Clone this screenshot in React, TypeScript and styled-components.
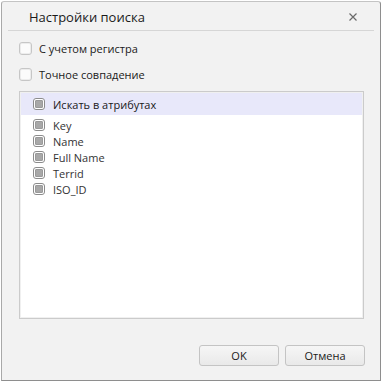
import styled, { createGlobalStyle } from "styled-components";

const GlobalStyle = createGlobalStyle`
  body {
    margin: 0;
    background: #ffffff;
    font-family: "Open Sans", "Liberation Sans", sans-serif;
  }
`;

const Dialog = styled.div`
  box-sizing: border-box;
  width: 380px;
  height: 380px;
  margin: 1px 0 0 1px;
  display: flex;
  flex-direction: column;
  background: #f2f2f2;
  border: 1px solid #c4c4c4;
  border-right-color: #8e8e8e;
  border-bottom-color: #8e8e8e;
  border-left-color: #a9a9a9;
  border-radius: 3px 3px 0 0;
`;

const Header = styled.div`
  height: 28px;
  display: flex;
  align-items: center;
  justify-content: space-between;
  padding: 0 22px 0 27px;
`;

const Title = styled.div`
  font-size: 13px;
  color: #1a1a1a;
  padding-top: 1px;
`;

const Close = styled.div`
  width: 10px;
  height: 10px;
  display: flex;
  align-items: center;
  justify-content: center;
  margin-top: 2px;
`;

const Divider = styled.div`
  height: 1px;
  margin: 0 6px;
  background: #d6d6d6;
`;

const Body = styled.div`
  flex: 1;
  display: flex;
  flex-direction: column;
  padding: 10px 16px 0 17px;
`;

const Options = styled.div`
  display: flex;
  flex-direction: column;
  gap: 12px;
`;

const OptionRow = styled.label`
  height: 14px;
  display: flex;
  align-items: center;
  gap: 7px;
  font-size: 11px;
  color: #1a1a1a;
`;

const Box = styled.span`
  box-sizing: border-box;
  width: 13px;
  height: 13px;
  border: 1px solid #c6c6c6;
  border-radius: 3px;
  background: #fbfbfb;
  box-shadow: inset 0 0 0 1px #ececec;
`;

const ListBox = styled.div`
  box-sizing: border-box;
  height: 228px;
  margin-top: 10px;
  border: 1px solid #cbcbcb;
  padding: 1px;
  background: #f0f0f0;
  display: flex;
  flex-direction: column;
`;

const ListInner = styled.div`
  flex: 1;
  background: #ffffff;
  display: flex;
  flex-direction: column;
`;

const ListHeader = styled.div`
  height: 22px;
  display: flex;
  align-items: center;
  gap: 8px;
  padding-left: 12px;
  background: #e8e8fa;
  font-size: 11px;
  color: #1a1a1a;
  margin-bottom: 2px;
`;

const Item = styled.div`
  height: 16px;
  display: flex;
  align-items: center;
  gap: 8px;
  padding-left: 12px;
  font-size: 11px;
  color: #333333;
`;

const GrayBox = styled.span`
  box-sizing: border-box;
  width: 12px;
  height: 12px;
  border: 1px solid #8c8c8c;
  border-radius: 3px;
  padding: 1px;
  background: #ffffff;
  display: flex;

  &::after {
    content: "";
    flex: 1;
    background: #a8a8a8;
    border: 1px solid #9a9a9a;
    border-radius: 1px;
  }
`;

const Footer = styled.div`
  display: flex;
  justify-content: flex-end;
  gap: 6px;
  padding: 0 15px 14px 0;
`;

const Button = styled.button`
  box-sizing: border-box;
  width: 80px;
  height: 21px;
  padding: 0;
  border: 1px solid #c4c4c4;
  border-radius: 3px;
  background: linear-gradient(#f6f6f6, #e9e9e9);
  font-family: "Open Sans", "Liberation Sans", sans-serif;
  font-size: 11px;
  color: #1a1a1a;
`;

const attributes = ["Key", "Name", "Full Name", "Terrid", "ISO_ID"];

export default function App() {
  return (
    <>
      <GlobalStyle />
      <Dialog>
        <Header>
          <Title>Настройки поиска</Title>
          <Close>
            <svg width="8" height="8" viewBox="0 0 8 8">
              <path d="M0.5 0.5 L7.5 7.5 M7.5 0.5 L0.5 7.5" stroke="#6a6a6a" strokeWidth="1.2" />
            </svg>
          </Close>
        </Header>
        <Divider />
        <Body>
          <Options>
            <OptionRow>
              <Box />С учетом регистра
            </OptionRow>
            <OptionRow>
              <Box />Точное совпадение
            </OptionRow>
          </Options>
          <ListBox>
            <ListInner>
              <ListHeader>
                <GrayBox />Искать в атрибутах
              </ListHeader>
              {attributes.map((a) => (
                <Item key={a}>
                  <GrayBox />
                  {a}
                </Item>
              ))}
            </ListInner>
          </ListBox>
        </Body>
        <Footer>
          <Button>OK</Button>
          <Button>Отмена</Button>
        </Footer>
      </Dialog>
    </>
  );
}
